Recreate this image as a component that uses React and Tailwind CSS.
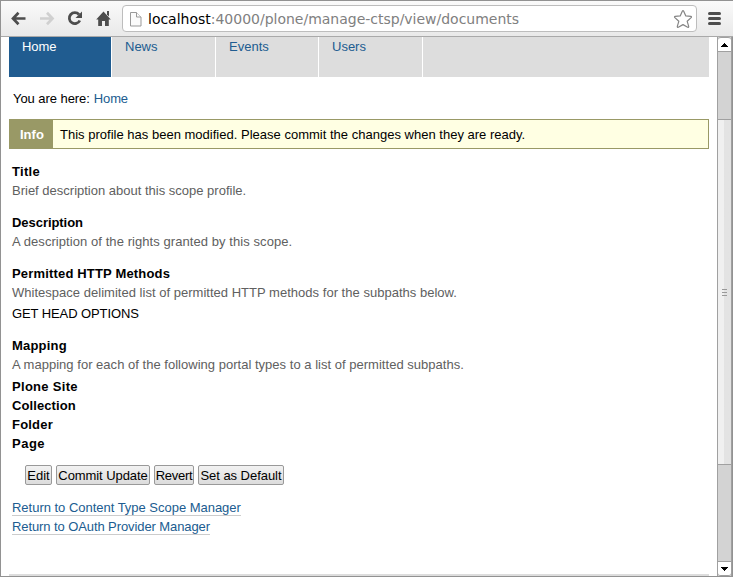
import React from 'react';

const tabs = [
  { label: 'News', width: 'w-[104px]' },
  { label: 'Events', width: 'w-[103px]' },
  { label: 'Users', width: 'w-[104px]' },
];

function Toolbar() {
  return (
    <header className="flex h-[36px] shrink-0 items-center border-b border-[#a9a9a9] bg-linear-to-b from-[#fafafa] to-[#e9e9e9]">
      <svg width="121" height="35" viewBox="1 1 121 35" fill="none" className="shrink-0">
        <path d="M25.500 18.500H13.500M18.500 12.800l-5.500 5.700 5.500 5.700" stroke="#4d4d4d" strokeWidth="2.700" />
        <path d="M40 18.500h12M47 12.800l5.500 5.700-5.500 5.700" stroke="#d0d0d0" strokeWidth="2.700" />
        <path d="M79 14.500a5.500 5.500 0 1 0 .8 6" stroke="#4d4d4d" strokeWidth="2.800" />
        <path d="M82 11.500v6.500h-6.500z" fill="#4d4d4d" />
        <path d="M103.500 11.500l7.300 8h-2v6.500h-3.800v-5h-3v5h-3.800v-6.500h-2z" fill="#4d4d4d" />
        <path d="M107 11h2v5.500l-2-2z" fill="#4d4d4d" />
      </svg>
      <div className="flex h-[27px] w-[575px] shrink-0 items-center rounded-[4px] border border-[#bdbdbd] bg-white pl-[7px] pr-[3px]">
        <svg width="12" height="15" viewBox="0 0 12 15" fill="#fbfbfb" stroke="#999" className="mt-px shrink-0">
          <path d="M.5.500h6l4.500 4.500v9H.5z" />
          <path d="M6.500.500V5H11" />
        </svg>
        <span className="ml-[6px] whitespace-pre font-['DejaVu_Sans',sans-serif] text-[14px] leading-[20px] tracking-[-0.010px] text-[#808080]">
          <span className="text-black">localhost</span>:40000/plone/manage-ctsp/view/documents
        </span>
        <svg width="20" height="20" viewBox="0 0 20 20" fill="#fff" stroke="#858585" strokeWidth="1.200" strokeLinejoin="round" className="ml-auto shrink-0">
          <path d="M9.300 2.200q.7-1.200 1.400 0l2.100 4.700 5 .5q1.200.3.300 1.200l-3.900 3.700 1.500 5.100q0 1.200-1 .8L10 15.600l-4.700 2.600q-1 .4-1-.8l1.500-5.100-3.900-3.700q-.9-.9.3-1.200l5-.5z" />
        </svg>
      </div>
      <div className="ml-[11px] flex w-[13px] flex-col gap-[2px] pb-px">
        <div className="h-[3px] rounded-full bg-[#4d4d4d]" />
        <div className="h-[3px] rounded-full bg-[#4d4d4d]" />
        <div className="h-[3px] rounded-full bg-[#4d4d4d]" />
      </div>
    </header>
  );
}

function Scrollbar() {
  return (
    <div className="flex w-[15px] shrink-0 flex-col border-x border-[#a0a0a0] bg-[#d3d3d3]">
      <div className="flex h-[15px] items-center justify-center rounded-t-[3px] border-y border-[#a0a0a0] bg-white">
        <svg width="7" height="4" viewBox="0 0 7 4" shapeRendering="crispEdges"><path d="M3 0h1v1h1v1h1v1h1v1H0V3h1V2h1V1h1z" /></svg>
      </div>
      <div className="h-[67px]" />
      <div className="flex h-[346px] flex-col items-center justify-center gap-[2px] border-y border-[#a0a0a0] bg-linear-to-r from-[#f0f0f0] from-50% to-[#e3e3e3] to-50%">
        <div className="h-px w-[5px] bg-[#999]" />
        <div className="h-px w-[5px] bg-[#999]" />
        <div className="h-px w-[5px] bg-[#999]" />
      </div>
      <div className="flex-1" />
      <div className="flex h-[15px] items-center justify-center rounded-b-[3px] border-y border-[#a0a0a0] bg-white">
        <svg width="7" height="4" viewBox="0 0 7 4" shapeRendering="crispEdges"><path d="M0 0h7v1H6v1H5v1H4v1H3V3H2V2H1V1H0z" /></svg>
      </div>
    </div>
  );
}

function Field({ title, track, help, helpTrack = 'tracking-[0.020px]', children }) {
  return (
    <section className="mb-[13px]">
      <h2><span className={`font-bold ${track}`}>{title}</span></h2>
      <p className="text-[#606060]"><span className={helpTrack}>{help}</span></p>
      {children}
    </section>
  );
}

function PageButton({ label, width, track }) {
  return (
    <button className={`flex h-[20px] items-center justify-center rounded-[2px] border border-[#999] bg-linear-to-b from-[#f2f2f2] to-[#dcdcdc] ${width} ${track}`}>
      <span>{label}</span>
    </button>
  );
}

export default function App() {
  return (
    <div className="flex h-[577px] w-[733px] flex-col overflow-hidden border border-r-0 border-[#929292] bg-white">
      <Toolbar />
      <div className="flex min-h-0 flex-1">
        <main className="flex w-[716px] shrink-0 flex-col pl-2 pr-[8px] font-['Liberation_Sans',Arial,sans-serif] text-[13px] leading-[19px] whitespace-nowrap text-black">
          <nav className="flex h-[40px] shrink-0 bg-[#ddd] text-[#205c90]">
            <div className="w-[103px] border-r border-white bg-[#205c90] pl-[13px] text-white"><span className="tracking-[-0.100px]">Home</span></div>
            {tabs.map((t) => (
              <div key={t.label} className={`border-r border-white pl-[13px] ${t.width}`}>
                <span>{t.label}</span>
              </div>
            ))}
          </nav>
          <div className="mt-[12px] flex h-[19px] gap-[4px] pl-1">
            <span className="tracking-[-0.060px]">You are here:</span>
            <span className="tracking-[-0.150px] text-[#205c90]">Home</span>
          </div>
          <div className="mt-[11px] flex h-[30px] shrink-0 items-center border border-[#996] bg-[#ffffe3]">
            <div className="flex h-full w-[43px] items-center bg-[#996] pl-[10px] font-bold text-white"><span>Info</span></div>
            <span className="ml-[7px] tracking-[0.010px]">This profile has been modified. Please commit the changes when they are ready.</span>
          </div>
          <div className="mt-[13px] pl-[3px]">
            <Field title="Title" track="tracking-[0.300px]" help="Brief description about this scope profile." helpTrack="tracking-[0px]" />
            <Field title="Description" track="tracking-[-0.050px]" help="A description of the rights granted by this scope." helpTrack="tracking-[0.070px]" />
            <Field title="Permitted HTTP Methods" track="tracking-[0.170px]" help="Whitespace delimited list of permitted HTTP methods for the subpaths below.">
              <p className="mt-[2px]"><span className="tracking-[-0.090px]">GET HEAD OPTIONS</span></p>
            </Field>
            <Field title="Mapping" track="tracking-[0.200px]" help="A mapping for each of the following portal types to a list of permitted subpaths.">
              <ul className="mt-[3px] font-bold">
                <li><span className="tracking-[0.300px]">Plone Site</span></li>
                <li><span className="tracking-[0.100px]">Collection</span></li>
                <li><span className="tracking-[0.200px]">Folder</span></li>
                <li><span className="tracking-[0.500px]">Page</span></li>
              </ul>
            </Field>
          </div>
          <div className="-mt-px flex gap-1 pl-4">
            <PageButton label="Edit" width="w-[27px]" track="tracking-[0px]" />
            <PageButton label="Commit Update" width="w-[94px]" track="tracking-[-0.080px]" />
            <PageButton label="Revert" width="w-[40px]" track="tracking-[-0.300px]" />
            <PageButton label="Set as Default" width="w-[86px]" track="tracking-[-0.040px]" />
          </div>
          <div className="mt-[14px] flex flex-col items-start gap-[2px] pl-[3px] text-[#205c90]">
            <a className="h-[17px] border-b border-[#ccc] leading-[18px] tracking-[-0.020px]">Return to Content Type Scope Manager</a>
            <a className="h-[17px] border-b border-[#ccc] leading-[18px] tracking-[-0.090px]">Return to OAuth Provider Manager</a>
          </div>
          <div className="mt-auto h-[2px] bg-[#ddd]" />
        </main>
        <Scrollbar />
        <div className="flex-1 bg-[#929292]" />
      </div>
    </div>
  );
}
